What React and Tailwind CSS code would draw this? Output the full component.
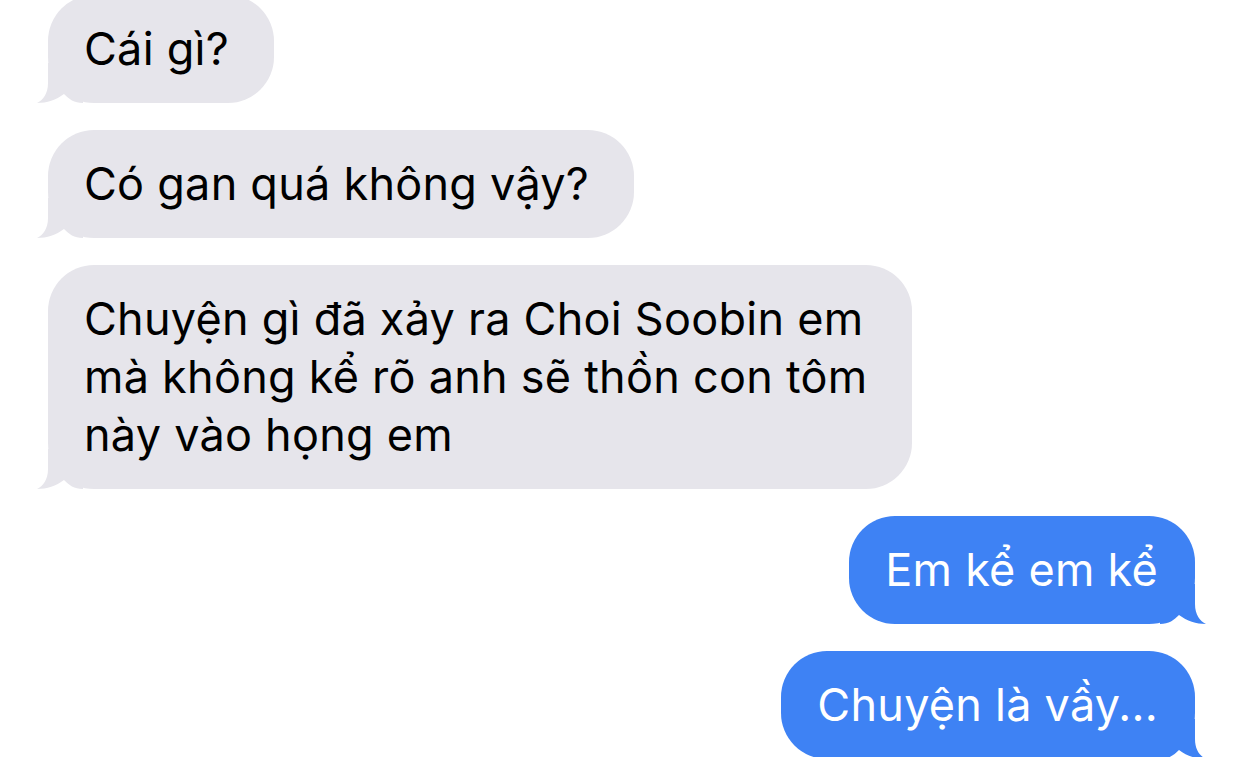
import React from 'react';

const messages = [
    { from: 'them', lines: ['Cái gì?'] },
    { from: 'them', lines: ['Có gan quá không vậy?'] },
    {
        from: 'them',
        lines: ['Chuyện gì đã xảy ra Choi Soobin em', 'mà không kể rõ anh sẽ thồn con tôm', 'này vào họng em'],
    },
    { from: 'me', lines: ['Em kể em kể'] },
    { from: 'me', lines: ['Chuyện là vầy...'] },
];

function Tail({ color, side }) {
    const pos = side === 'left' ? 'left-[-11px]' : 'right-[-11px] -scale-x-100';
    return (
        <svg
            className={`absolute bottom-0 ${pos}`}
            width="46"
            height="40"
            viewBox="0 0 46 40"
        >
            <path
                d="M11 0 L11 20 C11 31 6 37 0 40 C 10 40 19 37 27 31 C 32 36 37 40 46 40 L46 0 Z"
                fill={color}
            />
        </svg>
    );
}

function Bubble({ from, lines }) {
    const mine = from === 'me';
    const color = mine ? '#3e82f4' : '#e6e5eb';
    return (
        <div className={`flex ${mine ? 'justify-end pr-[47px]' : 'justify-start pl-[48px]'}`}>
            <div
                className={`relative rounded-[46px] py-[25px] text-[45px] leading-[58px] tracking-[0.25px] ${
                    mine ? 'bg-[#3e82f4] text-white pl-[36px] pr-[37px]' : 'bg-[#e6e5eb] text-black pl-[36px] pr-[45px]'
                }`}
            >
                <Tail color={color} side={mine ? 'right' : 'left'} />
                <div className="relative whitespace-nowrap">
                    {lines.map((l, i) => (
                        <div key={i}>{l}</div>
                    ))}
                </div>
            </div>
        </div>
    );
}

export default function App() {
    return (
        <div
            className="w-[1242px] h-[757px] overflow-hidden bg-white"
            style={{ fontFamily: 'Inter, "Noto Sans", sans-serif' }}
        >
            <div className="flex flex-col gap-[27px] -mt-[5px]">
                {messages.map((m, i) => (
                    <Bubble key={i} {...m} />
                ))}
            </div>
        </div>
    );
}
